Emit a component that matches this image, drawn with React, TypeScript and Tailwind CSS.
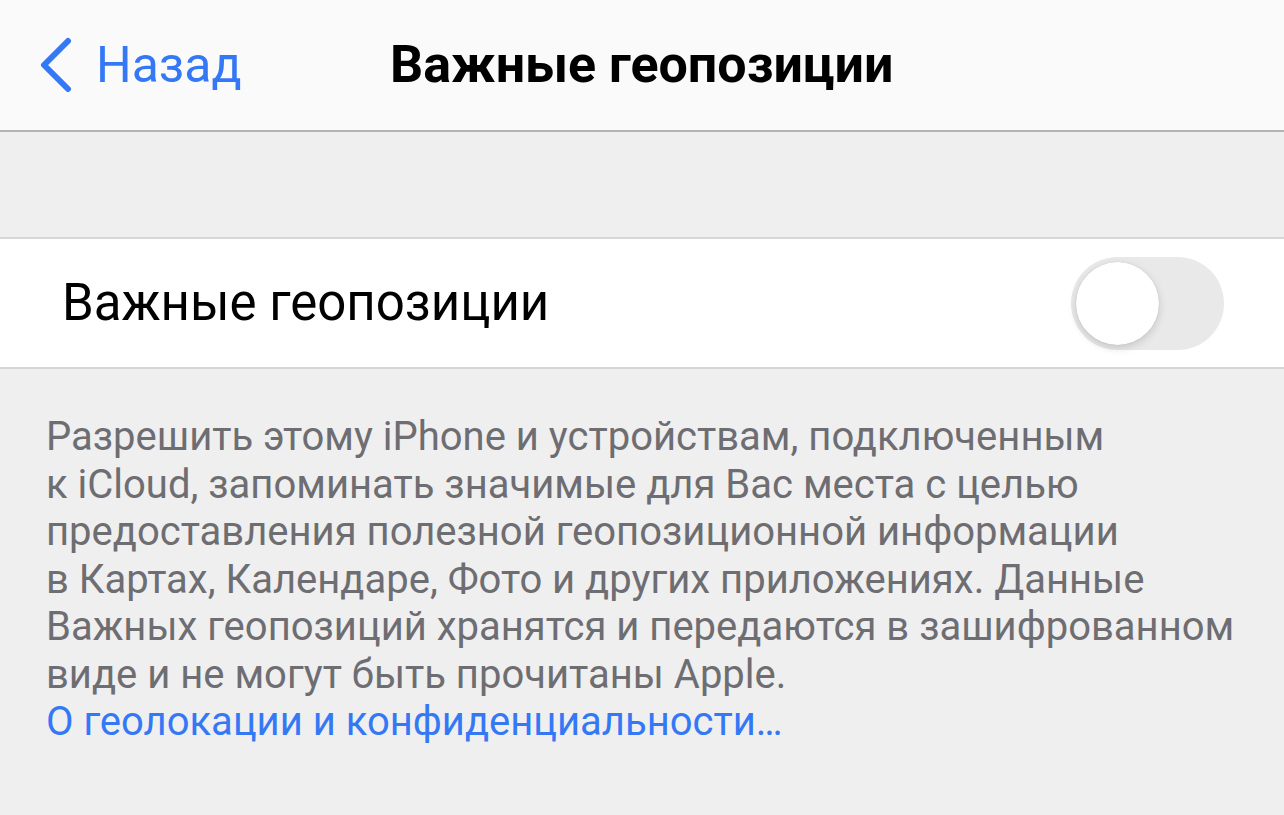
import React from "react";

const footerLines = [
  "Разрешить этому iPhone и устройствам, подключенным",
  "к iCloud, запоминать значимые для Вас места с целью",
  "предоставления полезной геопозиционной информации",
  "в Картах, Календаре, Фото и других приложениях. Данные",
  "Важных геопозиций хранятся и передаются в зашифрованном",
  "виде и не могут быть прочитаны Apple.",
];

function Toggle() {
  return (
    <div className="flex h-[93px] w-[153px] items-center rounded-full bg-[#e9e9e9] p-[5px]">
      <div className="h-[83px] w-[83px] rounded-full bg-white shadow-[0_3px_8px_rgba(0,0,0,0.15),0_0_1px_rgba(0,0,0,0.2)]" />
    </div>
  );
}

export default function App() {
  return (
    <div className="h-[815px] w-[1284px] overflow-hidden bg-[#efefef] font-['Roboto',sans-serif]">
      <header className="relative flex h-[132px] items-center border-b-2 border-[#b4b4b4] bg-[#fafafa]">
        <button className="flex items-center pl-[38px] text-[#3478f6]">
          <svg width="36" height="56" viewBox="0 0 36 56" fill="none">
            <path
              d="M30 4 L6 28 L30 52"
              stroke="currentColor"
              strokeWidth="6"
              strokeLinecap="round"
              strokeLinejoin="round"
            />
          </svg>
          <span className="ml-[22px] text-[50px] leading-none">Назад</span>
        </button>
        <h1 className="absolute left-[390px] text-[52px] font-bold leading-none text-black">
          Важные геопозиции
        </h1>
      </header>

      <div className="h-[105px]" />

      <div className="flex h-[132px] items-center justify-between border-y-2 border-[#d6d6d6] bg-white pl-[62px] pr-[60px]">
        <span className="text-[51px] text-black">Важные геопозиции</span>
        <Toggle />
      </div>

      <div className="px-[46px] pt-[44px] text-[40px] leading-[47.5px] text-[#6d6d72]">
        {footerLines.map((line) => (
          <div key={line} className="whitespace-nowrap">
            {line}
          </div>
        ))}
        <div className="whitespace-nowrap text-[#3478f6]">О геолокации и конфиденциальности…</div>
      </div>
    </div>
  );
}
